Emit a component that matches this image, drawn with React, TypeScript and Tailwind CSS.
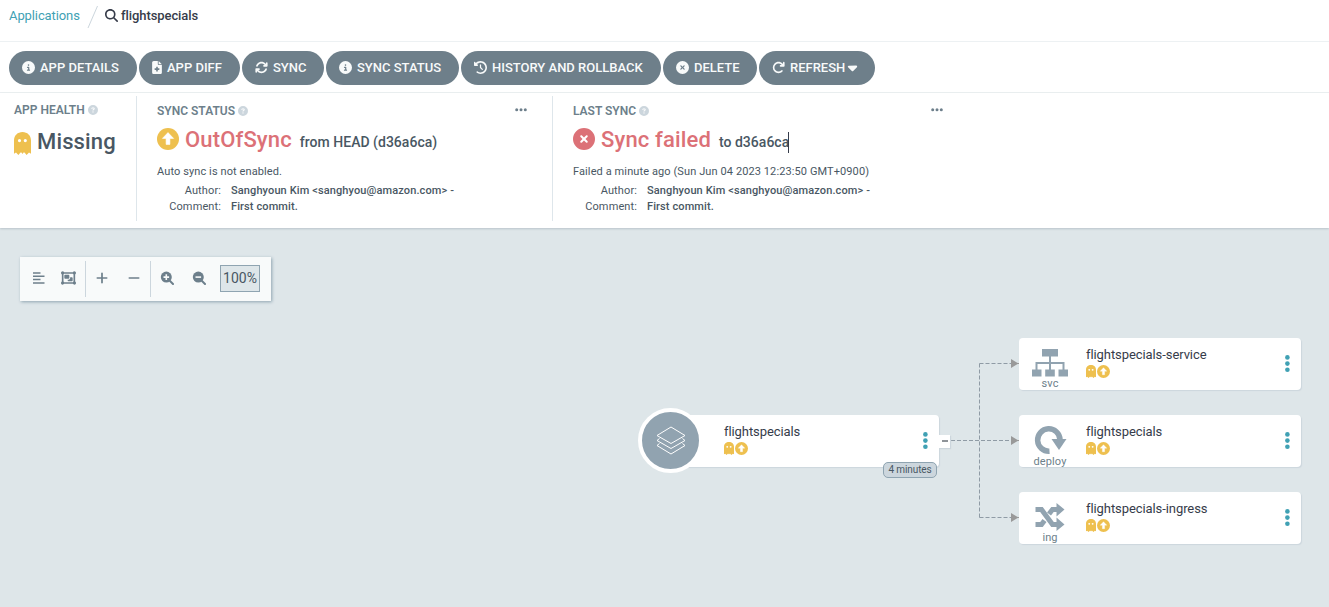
import type { ReactNode } from 'react';
import {
  FaArrowRotateRight,
  FaArrowsRotate,
  FaCaretDown,
  FaCircleInfo,
  FaCircleQuestion,
  FaCircleXmark,
  FaClockRotateLeft,
  FaFileMedical,
  FaMagnifyingGlass,
  FaMinus,
  FaObjectGroup,
  FaPlus,
} from 'react-icons/fa6';

function Ghost({ className }: { className: string }) {
  return (
    <svg viewBox="0 0 17 23" preserveAspectRatio="none" className={className} fill="currentColor">
      <path
        fillRule="evenodd"
        d="M0 8.5C0 3.5 3.600 0 8.500 0S17 3.500 17 8.500V21.700L15 20.600L12.600 23L10.500 20.600H9.500L8.500 22L7.500 20.600H6.500L4.400 23L2 20.600L0 21.700ZM5.500 7A1.600 1.600 0 1 0 5.500 10.200A1.600 1.600 0 1 0 5.500 7ZM11.300 7A1.600 1.600 0 1 0 11.300 10.200A1.600 1.600 0 1 0 11.300 7Z"
      />
    </svg>
  );
}

function ArrowCircle({ className }: { className: string }) {
  return (
    <svg viewBox="0 0 22 22" className={className}>
      <circle cx="11" cy="11" r="11" fill="#eec04f" />
      <path d="M11 4.600L16.600 10.400H12.900V16.400H9.100V10.400H5.400Z" fill="#fff" stroke="#fff" strokeWidth="0.600" strokeLinejoin="round" />
    </svg>
  );
}

function ActionButton({ icon, label, className, caret }: { icon: ReactNode; label: string; className: string; caret?: boolean }) {
  return (
    <button className={`flex h-[34px] shrink-0 items-center rounded-full bg-[#6e7f8a] pl-[13px] text-[13px] font-medium whitespace-nowrap text-[#f8fafa] ${className}`}>
      <span className="mb-[2px] flex">{icon}</span>
      <span>{label}</span>
      {caret && <FaCaretDown className="mb-px ml-[2px] h-[15px] w-[11px]" />}
    </button>
  );
}

function PanelTitle({ children }: { children: ReactNode }) {
  return (
    <div className="flex h-4 items-center text-[12px] leading-4 text-[#6d7f8b]">
      <span className="font-semibold">{children}</span>
      <FaCircleQuestion className="ml-[3px] h-[10px] w-[10px] text-[#ccd6dd]" />
    </div>
  );
}

function More() {
  return (
    <svg viewBox="0 0 12 4" className="mt-[5px] h-[4px] w-[12px]" fill="#6d7f8b">
      <circle cx="1.700" cy="1.700" r="1.500" />
      <circle cx="6" cy="1.700" r="1.500" />
      <circle cx="10.300" cy="1.700" r="1.500" />
    </svg>
  );
}

function Commit() {
  return (
    <div className="mt-[3px] grid grid-cols-[64px_1fr] gap-x-[10px] text-[11px] leading-4 tracking-[0.11px]">
      <span className="text-right">Author:</span>
      <span className="font-medium">Sanghyoun Kim &lt;sanghyou@amazon.com&gt; -</span>
      <span className="text-right">Comment:</span>
      <span className="font-medium">First commit.</span>
    </div>
  );
}

function ZoomGlyph({ plus }: { plus?: boolean }) {
  return (
    <svg viewBox="0 0 14 14" className="h-[14px] w-[14px]">
      <path d="M9 9L13 13" stroke="#6d7f8b" strokeWidth="2" strokeLinecap="round" />
      <circle cx="6.300" cy="6.100" r="5.500" fill="#6d7f8b" />
      <path d={plus ? 'M3.500 6.100H9.100M6.300 3.300V8.900' : 'M3.500 6.100H9.100'} stroke="#f8fafa" strokeWidth="1.600" />
    </svg>
  );
}

function Dots() {
  return (
    <svg viewBox="0 0 6 18" className="h-[18px] w-[6px]" fill="#40a1b4">
      <circle cx="3.400" cy="2.400" r="2.300" />
      <circle cx="3.400" cy="8.600" r="2.300" />
      <circle cx="3.400" cy="14.800" r="2.300" />
    </svg>
  );
}

function NodeText({ name }: { name: string }) {
  return (
    <div className="flex flex-col">
      <span className="text-[13px] leading-[18px] tracking-[-0.08px] whitespace-nowrap text-[#363c4a]">{name}</span>
      <span className="mt-px flex items-center gap-px">
        <Ghost className="h-[13px] w-[10px] text-[#eec04f]" />
        <ArrowCircle className="h-[13px] w-[13px]" />
      </span>
    </div>
  );
}

function ResourceNode({ name, kind, icon, className }: { name: string; kind: string; icon: ReactNode; className: string }) {
  return (
    <div className={`absolute left-[1019px] flex h-[52px] w-[282px] rounded-[4px] bg-white shadow-[1px_1px_1px_#ccd6dd] ${className}`}>
      <div className="flex w-[62px] flex-col items-center pt-[10px]">
        <div className="flex h-[31px] items-center justify-center">{icon}</div>
        <span className="text-[11px] leading-[13px] tracking-[0.1px] text-[#6d7f8b]">{kind}</span>
      </div>
      <div className="flex-1 pt-[8px] pl-[5px]">
        <NodeText name={name} />
      </div>
      <div className="pt-[17px] pr-[11px]">
        <Dots />
      </div>
    </div>
  );
}

function ServiceIcon() {
  return (
    <svg viewBox="0 0 36 28" className="h-[28px] w-[36px]" fill="#91a3b0">
      <path d="M10 0H26V7.500H19V13H32.500V20.500H36V27.500H26.500V20.500H30.500V15H19V20.500H22.800V27.500H13.200V20.500H17V15H5.500V20.500H9.500V27.500H0V20.500H3.500V13H17V7.500H10Z" />
    </svg>
  );
}

function DeployIcon() {
  return (
    <svg viewBox="0 0 33 30" className="h-[30px] w-[33px]">
      <path d="M15.500 26.200A11.200 11.200 0 1 1 26 14.500" fill="none" stroke="#91a3b0" strokeWidth="5.500" />
      <path d="M17.500 14H32.500L25 25Z" fill="#91a3b0" />
    </svg>
  );
}

function IngressIcon() {
  return (
    <svg viewBox="0 0 30 28" className="h-[28px] w-[30px]">
      <path d="M0.500 6.500H6.500L17.500 21.500H22.500M0.500 21.500H6.500L9.500 17.500M14 11L17.500 6.500H22.500" fill="none" stroke="#91a3b0" strokeWidth="5" />
      <path d="M21.500 0L29.500 6.500L21.500 13.500ZM21.500 14.500L29.500 21.500L21.500 28Z" fill="#91a3b0" />
    </svg>
  );
}

function LayersIcon() {
  return (
    <svg viewBox="0 0 30 29" className="h-[29px] w-[30px]" fill="none" stroke="#fff" strokeWidth="1" strokeLinejoin="round">
      <path d="M15 1L29 9.500L15 17.500L1 9.500Z" />
      <path d="M3.500 12.500L1 14.500L15 22.500L29 14.500L26.500 12.500" />
      <path d="M3.500 17.500L1 19.500L15 28L29 19.500L26.500 17.500" />
    </svg>
  );
}

export default function App() {
  return (
    <div className="flex h-[607px] w-[1329px] flex-col overflow-hidden bg-white font-[Roboto,sans-serif] text-[#495763]">
      <header className="flex h-[42px] shrink-0 border-b border-[#edf1f3] pl-[9px] text-[13px] leading-[32px]">
        <span className="w-[78px] tracking-[-0.1px] text-[#40a1b4]">Applications</span>
        <svg viewBox="0 0 12 24" className="mt-[5px] h-[24px] w-[12px]">
          <path d="M1 23L10.500 1" stroke="#ccd6dd" />
        </svg>
        <FaMagnifyingGlass className="mt-[9px] ml-[6px] h-[13px] w-[13px] text-[#363c4a]" />
        <span className="ml-[3px] font-medium tracking-[-0.080px] text-[#363c4a]">flightspecials</span>
      </header>

      <nav className="flex h-[51px] shrink-0 items-center gap-[2px] border-b border-[#edf1f3] pt-[2px] pl-[9px]">
        <ActionButton className="w-[128px]" icon={<FaCircleInfo className="mr-[5px] h-[13px] w-[13px]" />} label="APP DETAILS" />
        <ActionButton className="w-[101px]" icon={<FaFileMedical className="mr-[5px] h-[13px] w-[10px]" />} label="APP DIFF" />
        <ActionButton className="w-[82px]" icon={<FaArrowsRotate className="mr-[5px] h-[13px] w-[13px]" />} label="SYNC" />
        <ActionButton className="w-[133px]" icon={<FaCircleInfo className="mr-[5px] h-[13px] w-[13px]" />} label="SYNC STATUS" />
        <ActionButton className="w-[200px]" icon={<FaClockRotateLeft className="mr-[5px] h-[13px] w-[13px]" />} label="HISTORY AND ROLLBACK" />
        <ActionButton className="w-[94px]" icon={<FaCircleXmark className="mr-[5px] h-[13px] w-[13px]" />} label="DELETE" />
        <ActionButton className="w-[116px]" icon={<FaArrowRotateRight className="mr-[5px] h-[13px] w-[13px]" />} label="REFRESH" caret />
      </nav>

      <section className="z-10 flex h-[135px] shrink-0 pt-[3px] shadow-[0_1px_2px_#b9c4ca]">
        <div className="h-[125px] w-[137px] border-r border-[#dee6eb] pt-[6px] pl-[14px]">
          <PanelTitle>APP HEALTH</PanelTitle>
          <div className="mt-[8px] flex h-[30px] items-center text-[22px] font-medium tracking-[0.15px]">
            <Ghost className="mt-[4px] mr-[6px] h-[23px] w-[17px] text-[#eec04f]" />
            <span>Missing</span>
          </div>
        </div>

        <div className="flex h-[125px] w-[416px] justify-between border-r border-[#dee6eb] pt-[7px] pr-[25px] pl-[20px]">
          <div>
            <PanelTitle>SYNC STATUS</PanelTitle>
            <div className="mt-[5px] flex h-[30px] items-center">
              <ArrowCircle className="-mt-[1px] mr-[6px] h-[22px] w-[22px]" />
              <span className="text-[22px] font-medium tracking-[0.15px] text-[#dc7177]">OutOfSync</span>
              <span className="mt-[7px] ml-[8px] text-[14px] font-medium tracking-[0.02px]">from HEAD (d36a6ca)</span>
            </div>
            <div className="mt-[10px] text-[11px] leading-4 tracking-[0.1px]">Auto sync is not enabled.</div>
            <Commit />
          </div>
          <More />
        </div>

        <div className="flex h-[125px] w-[390px] justify-between pt-[7px] pl-[20px]">
          <div>
            <PanelTitle>LAST SYNC</PanelTitle>
            <div className="mt-[5px] flex h-[30px] items-center">
              <FaCircleXmark className="-mt-[1px] mr-[6px] h-[22px] w-[22px] text-[#dc7177]" />
              <span className="text-[22px] font-medium tracking-[0.15px] text-[#dc7177]">Sync failed</span>
              <span className="mt-[7px] ml-[8px] text-[14px] font-medium tracking-[0.02px]">to d36a6ca</span>
              <span className="mt-[6px] -ml-[1px] h-[21px] w-px bg-[#363c4a]" />
            </div>
            <div className="mt-[10px] text-[11px] leading-4 tracking-[0.1px] whitespace-nowrap">Failed a minute ago (Sun Jun 04 2023 12:23:50 GMT+0900)</div>
            <Commit />
          </div>
          <More />
        </div>
      </section>

      <main className="relative flex-1 bg-[#dee6e9]">
        <div className="mt-[29px] ml-[20px] flex h-[44px] w-[251px] items-center bg-[#f8fafa] text-[#6d7f8b] shadow-[1px_1px_3px_#8fa4b1]">
          <div className="mb-[2px] flex w-[65px] items-center pl-[13px]">
            <svg viewBox="0 0 12 12" className="h-[12px] w-[12px]" stroke="currentColor" strokeWidth="1.500">
              <path d="M0 1H7.500M0 4.300H11.500M0 7.600H7.500M0 11H11.500" />
            </svg>
            <FaObjectGroup className="ml-[16px] h-[14px] w-[15px]" />
          </div>
          <div className="flex h-[36px] w-[66px] items-center border-x border-[#ccd6dd] pb-[2px] pl-[10px]">
            <FaPlus className="h-[14px] w-[12px]" />
            <FaMinus className="ml-[20px] h-[14px] w-[12px]" />
          </div>
          <div className="mb-[2px] flex items-center pl-[9px]">
            <ZoomGlyph plus />
            <span className="ml-[18px] flex">
              <ZoomGlyph />
            </span>
            <span className="ml-[14px] flex h-[27px] w-[40px] items-center justify-center border border-[#8fa4b1] bg-[#dee6e9] text-[14px] text-[#495763]">100%</span>
          </div>
        </div>

        <svg viewBox="0 228 1329 379" className="absolute inset-0 h-[379px] w-[1329px]" fill="none">
          <g stroke="#8f9ba5" strokeDasharray="4 2">
            <path d="M951 440.500H1011" />
            <path d="M979.500 363.500V517.500" />
            <path d="M979.500 363.500H1011M979.500 517.500H1011" />
          </g>
          <g fill="#999">
            <path d="M1011 359L1018.500 363.500L1011 368ZM1011 436L1018.500 440.500L1011 445ZM1011 513L1018.500 517.500L1011 522Z" />
            <path d="M1017 363H1019V364H1017ZM1017 440H1019V441H1017ZM1017 517H1019V518H1017Z" />
          </g>
        </svg>

        <div className="absolute top-[187px] left-[670px] flex h-[52px] w-[269px] justify-between rounded-[4px] bg-white pt-[8px] pr-[11px] pl-[54px] shadow-[1px_1px_1px_#ccd6dd]">
          <NodeText name="flightspecials" />
          <span className="mt-[9px]">
            <Dots />
          </span>
        </div>
        <div className="absolute top-[180px] left-[638px] flex h-[65px] w-[65px] items-center justify-center rounded-full border-4 border-white bg-[#91a3b0]">
          <LayersIcon />
        </div>
        <div className="absolute top-[207px] left-[939px] flex h-[13px] w-[11px] items-center justify-center bg-white pb-px shadow-[1px_1px_1px_#ccd6dd]">
          <span className="h-[2px] w-[6px] bg-[#8f9499]" />
        </div>
        <div className="absolute top-[234px] left-[883px] flex h-[16px] w-[54px] items-center justify-center rounded-[5px] border border-[#8fa4b1] bg-[#ccd6dd] pb-px text-[10px] tracking-[-0.1px] whitespace-nowrap">4 minutes</div>

        <ResourceNode className="top-[110px]" name="flightspecials-service" kind="svc" icon={<ServiceIcon />} />
        <ResourceNode className="top-[187px]" name="flightspecials" kind="deploy" icon={<DeployIcon />} />
        <ResourceNode className="top-[264px]" name="flightspecials-ingress" kind="ing" icon={<IngressIcon />} />
      </main>
    </div>
  );
}
